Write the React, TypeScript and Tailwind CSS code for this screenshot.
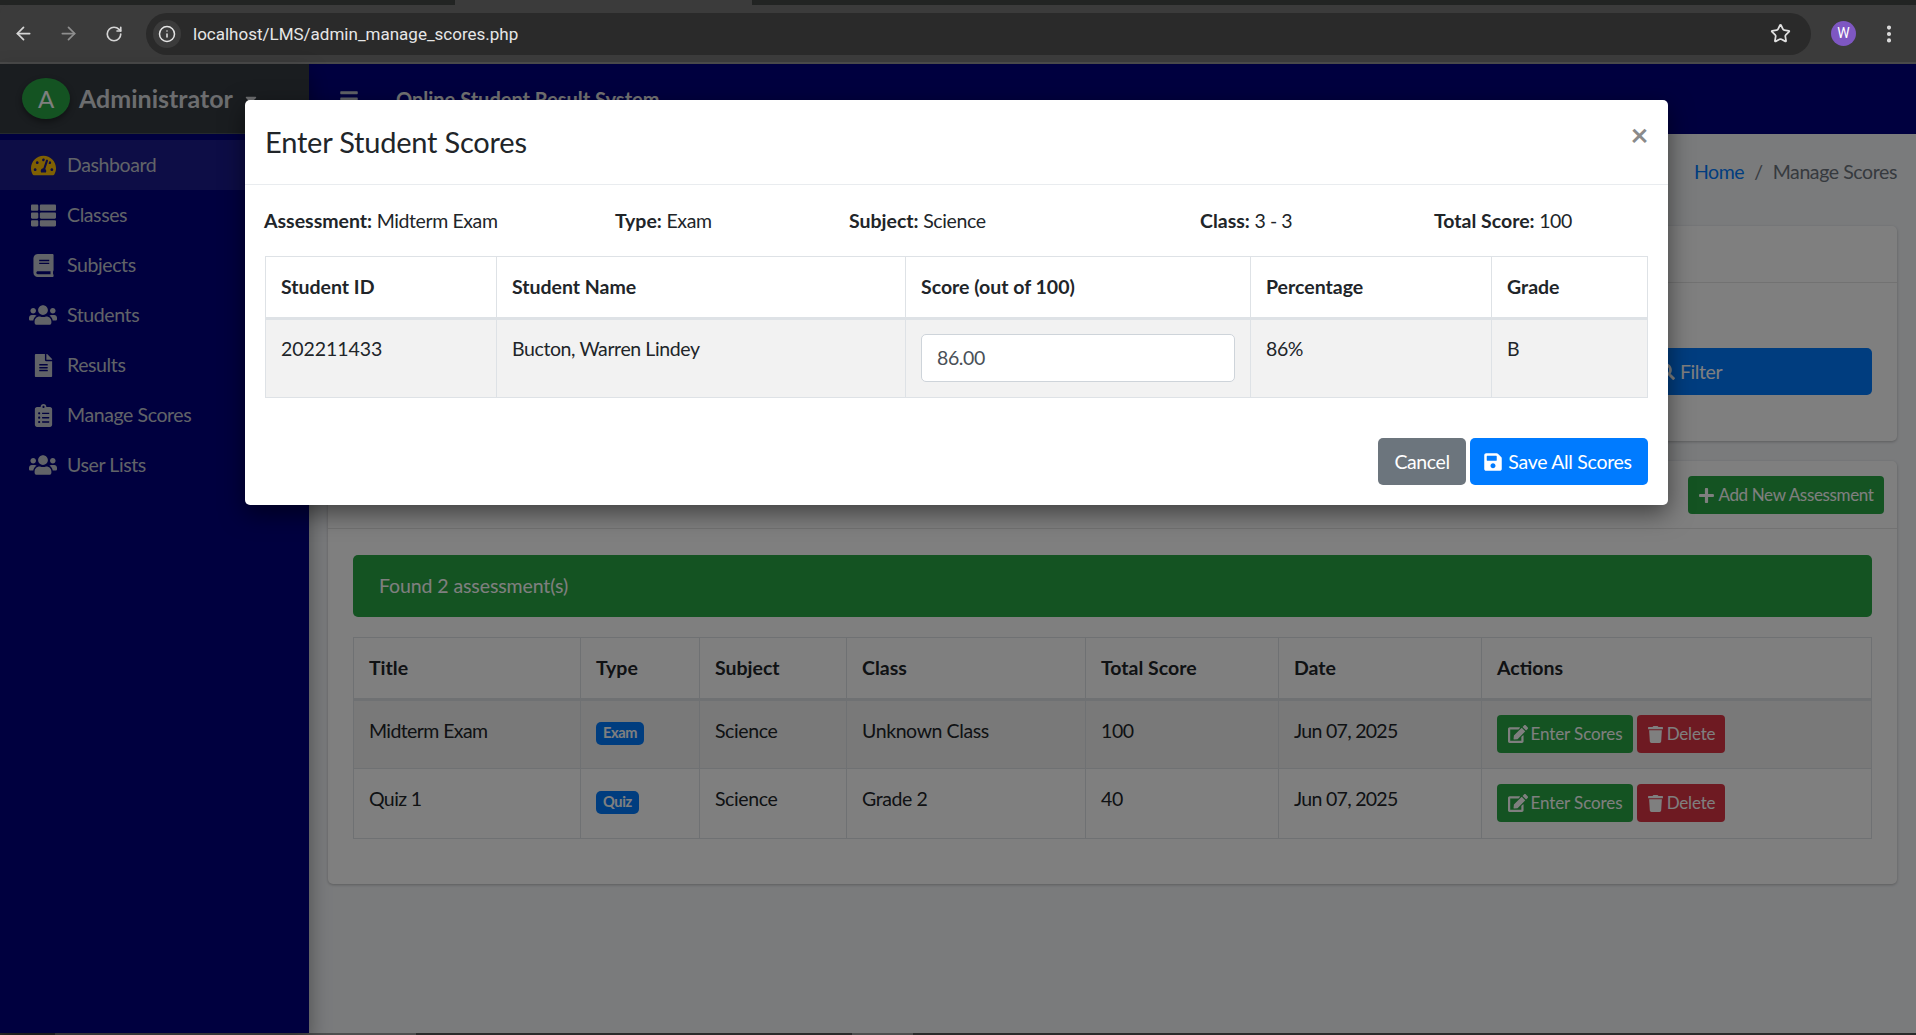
import React from "react";
import {
  FaTachometerAlt, FaThList, FaBook, FaUsers, FaFileAlt, FaClipboardList,
  FaSave, FaPlus, FaEdit, FaTrash, FaSearch, FaBars, FaCaretDown,
} from "react-icons/fa";
import { ArrowLeft, ArrowRight, RotateCw, Info, Star, EllipsisVertical } from "lucide-react";

const nav = [
  { label: "Dashboard", icon: FaTachometerAlt, active: true, size: "text-[25px]" },
  { label: "Classes", icon: FaThList, size: "text-[25px]" },
  { label: "Subjects", icon: FaBook, size: "text-[23px]" },
  { label: "Students", icon: FaUsers, size: "text-[28px]" },
  { label: "Results", icon: FaFileAlt, size: "text-[23px]" },
  { label: "Manage Scores", icon: FaClipboardList, size: "text-[23px]" },
  { label: "User Lists", icon: FaUsers, size: "text-[28px]" },
];

const rows = [
  { title: "Midterm Exam", type: "Exam", cls: "Unknown Class", total: "100", striped: true, h: "h-[69px]", pad: "pb-[8px]" },
  { title: "Quiz 1", type: "Quiz", cls: "Grade 2", total: "40", striped: false, h: "h-[70px]", pad: "pb-[10px]" },
];

function Sidebar() {
  return (
    <aside className="w-[309px] shrink-0 bg-[#00007f] shadow-[0_10px_20px_rgba(0,0,0,0.4)] z-10">
      <div className="h-[70px] bg-[#343a40] border-b border-[#4b545c] flex items-center pl-[22px]">
        <div className="w-[48px] h-[41px] rounded-[50%] bg-[#28a745] text-white flex items-center justify-center text-[24px] shadow-[0_3px_6px_rgba(0,0,0,0.4)]">A</div>
        <span className="ml-[9px] text-[25px] font-bold tracking-normal text-[#d8dade]">Administrator</span>
        <FaCaretDown className="ml-[9px] text-[#d8dade] text-[18px]" />
      </div>
      <nav className="pt-[6px] flex flex-col">
        {nav.map((n) => (
          <div key={n.label} className={`h-[50px] flex items-center ${n.active ? "bg-white/10" : ""}`}>
            <span className="w-[67px] flex justify-center pl-[19px]">
              <n.icon className={`${n.size} ${n.active ? "text-[#ffc107]" : "text-[#c2c7d0]"}`} />
            </span>
            <span className="text-[19.5px] text-[#c2c7d0]">{n.label}</span>
          </div>
        ))}
      </nav>
    </aside>
  );
}

function Background() {
  return (
    <main className="flex-1 min-w-0 flex flex-col bg-[#f4f6f9]">
      <header className="h-[70px] shrink-0 bg-[#00007f] flex items-center pl-[30px]">
        <FaBars className="text-[#c2c7d0] text-[20px]" />
        <span className="ml-[37px] text-[20px] font-bold tracking-normal text-[#e8e8e8]">Online Student Result System</span>
      </header>
      <div className="pl-[19px] pr-[19px]">
        <div className="h-[92px] flex justify-end pt-[26px] text-[19.5px] leading-[24px]">
          <span className="text-[#007bff]">Home</span>
          <span className="mx-[10px] text-[#6c757d]">/</span>
          <span className="text-[#6c757d]">Manage Scores</span>
        </div>

        <section className="h-[215px] bg-white rounded-[5px] shadow-[0_1px_3px_rgba(0,0,0,0.25)]">
          <div className="h-[57px] border-b border-[#e5e5e5]" />
          <div className="flex justify-end pt-[65px] pr-[25px]">
            <button className="w-[364px] h-[47px] bg-[#007bff] rounded-[5px] text-white text-[19.5px] flex items-center justify-center gap-[5px]">
              <FaSearch className="text-[17px]" />
              Filter
            </button>
          </div>
        </section>

        <section className="mt-[20px] h-[423px] bg-white rounded-[5px] shadow-[0_1px_3px_rgba(0,0,0,0.25)]">
          <div className="h-[68px] border-b border-[#e5e5e5] flex justify-end items-start pt-[15px] pr-[13px]">
            <button className="w-[196px] h-[38px] bg-[#28a745] rounded-[4px] text-white text-[17px] tracking-[-0.35px] flex items-center justify-center gap-[3px]">
              <FaPlus className="text-[17px]" />
              Add New Assessment
            </button>
          </div>
          <div className="px-[25px] pt-[26px]">
            <div className="h-[62px] bg-[#28a745] rounded-[5px] flex items-center pl-[26px] text-[19.5px] tracking-[-0.1px] text-white">Found 2 assessment(s)</div>
            <table className="mt-[20px] w-[1518px] table-fixed border-collapse text-[19.5px] text-[#212529]">
              <colgroup>
                <col className="w-[227px]" />
                <col className="w-[119px]" />
                <col className="w-[147px]" />
                <col className="w-[239px]" />
                <col className="w-[193px]" />
                <col className="w-[203px]" />
                <col className="w-[390px]" />
              </colgroup>
              <thead>
                <tr className="h-[62px]">
                  {["Title", "Type", "Subject", "Class", "Total Score", "Date", "Actions"].map((h) => (
                    <th key={h} className="border border-[#dee2e6] border-b-[3px] px-[15px] text-left font-bold tracking-normal">{h}</th>
                  ))}
                </tr>
              </thead>
              <tbody>
                {rows.map((r) => (
                  <tr key={r.title} className={`${r.h} ${r.striped ? "bg-black/5" : ""}`}>
                    <td className={`border border-[#dee2e6] px-[15px] tracking-[-0.6px] ${r.pad}`}>{r.title}</td>
                    <td className="border border-[#dee2e6] px-[15px] pb-[7px]">
                      <span className="inline-flex items-center h-[23px] px-[7px] bg-[#007bff] rounded-[5px] text-[14.6px] font-bold text-white">{r.type}</span>
                    </td>
                    <td className={`border border-[#dee2e6] px-[15px] ${r.pad}`}>Science</td>
                    <td className={`border border-[#dee2e6] px-[15px] ${r.pad}`}>{r.cls}</td>
                    <td className={`border border-[#dee2e6] px-[15px] ${r.pad}`}>{r.total}</td>
                    <td className={`border border-[#dee2e6] px-[15px] tracking-[-0.7px] ${r.pad}`}>Jun 07, 2025</td>
                    <td className="border border-[#dee2e6] px-[15px] pb-[1px]">
                      <div className="flex gap-[4px]">
                        <button className="w-[136px] h-[38px] bg-[#28a745] rounded-[4px] text-white text-[17px] tracking-[-0.1px] flex items-center justify-center gap-[3px]">
                          <FaEdit className="text-[20px]" />
                          Enter Scores
                        </button>
                        <button className="w-[88px] h-[38px] bg-[#dc3545] rounded-[4px] text-white text-[17px] tracking-[-0.2px] flex items-center justify-center gap-[3px]">
                          <FaTrash className="text-[17px]" />
                          Delete
                        </button>
                      </div>
                    </td>
                  </tr>
                ))}
              </tbody>
            </table>
          </div>
        </section>
      </div>
    </main>
  );
}

function Modal() {
  const info = [
    ["Assessment:", "Midterm Exam"],
    ["Type:", "Exam"],
    ["Subject:", "Science"],
    ["Class:", "3 - 3"],
    ["Total Score:", "100"],
  ];
  return (
    <div className="absolute left-[245px] top-[36px] w-[1423px] h-[405px] bg-white rounded-[5px] shadow-[0_8px_24px_rgba(0,0,0,0.5)] text-[#212529] z-30">
      <div className="h-[85px] border-b border-[#e9ecef] flex justify-between pl-[20px] pr-[20px]">
        <h5 className="text-[29px] tracking-[-0.2px] leading-[84px]">Enter Student Scores</h5>
        <span className="text-[31px] font-bold leading-[68px] text-[#8a8a8a]">×</span>
      </div>
      <div className="px-[20px]">
        <div className="-ml-[1px] grid grid-cols-[351px_234px_351px_234px_234px] h-[71px] items-center text-[19.5px]">
          {info.map(([k, v]) => (
            <div key={k}><b className="font-bold tracking-normal">{k}</b> {v}</div>
          ))}
        </div>
        <table className="w-[1382px] table-fixed border-collapse text-[19.5px]">
          <colgroup>
            <col className="w-[231px]" />
            <col className="w-[409px]" />
            <col className="w-[345px]" />
            <col className="w-[241px]" />
            <col className="w-[156px]" />
          </colgroup>
          <thead>
            <tr className="h-[62px]">
              {["Student ID", "Student Name", "Score (out of 100)", "Percentage", "Grade"].map((h) => (
                <th key={h} className="border border-[#dee2e6] border-b-[3px] px-[15px] text-left font-bold tracking-normal">{h}</th>
              ))}
            </tr>
          </thead>
          <tbody>
            <tr className="h-[79px] bg-[#f2f2f2]">
              <td className="border border-[#dee2e6] px-[15px] align-top pt-[14px] tracking-[-0.05px]">202211433</td>
              <td className="border border-[#dee2e6] px-[15px] align-top pt-[14px]">Bucton, Warren Lindey</td>
              <td className="border border-[#dee2e6] px-[15px] pb-[2px]">
                <input readOnly value="86.00" className="w-full h-[48px] bg-white border border-[#ced4da] rounded-[5px] px-[15px] text-[19.5px] text-[#495057] tracking-[-0.4px]" />
              </td>
              <td className="border border-[#dee2e6] px-[15px] align-top pt-[14px]">86%</td>
              <td className="border border-[#dee2e6] px-[15px] align-top pt-[14px]">B</td>
            </tr>
          </tbody>
        </table>
        <div className="flex justify-end gap-[4px] mt-[40px]">
          <button className="w-[88px] h-[47px] rounded-[5px] bg-[#6c757d] text-white text-[19.5px]">Cancel</button>
          <button className="w-[178px] h-[47px] rounded-[5px] bg-[#007bff] text-white text-[19.5px] tracking-[-0.3px] flex items-center justify-center gap-[5px] pr-[3px]">
            <FaSave className="text-[20px]" />
            Save All Scores
          </button>
        </div>
      </div>
    </div>
  );
}

export default function App() {
  return (
    <div className="w-[1916px] h-[1035px] flex flex-col overflow-hidden bg-[#3b3b3b] font-['Lato','Liberation_Sans',sans-serif] tracking-[-0.4px]">
      <div className="h-[5px] shrink-0 flex bg-[#222423]">
        <div className="w-[455px] rounded-br-[8px] bg-[#222423]" />
        <div className="w-[297px] bg-[#3b3b3b]" />
        <div className="flex-1 rounded-bl-[8px] bg-[#222423]" />
      </div>
      <div className="h-[57px] shrink-0 bg-[#3b3b3b] rounded-t-[8px] flex items-center text-[#d5d5d5]">
        <span className="w-[46px] flex justify-center"><ArrowLeft size={21} strokeWidth={2} /></span>
        <span className="w-[45px] flex justify-center text-[#8e8e8e]"><ArrowRight size={21} strokeWidth={2} /></span>
        <span className="w-[45px] flex justify-center"><RotateCw size={18} strokeWidth={2.2} /></span>
        <div className="ml-[10px] w-[1665px] h-[42px] rounded-full bg-[#2a2a2a] flex items-center pl-[7px] pr-[20px]">
          <span className="w-[28px] h-[28px] rounded-full bg-[#3b3b3b] flex items-center justify-center"><Info size={18} strokeWidth={2} className="text-[#e5e5e5]" /></span>
          <span className="ml-[12px] flex-1 pt-[2px] font-['Roboto',sans-serif] tracking-normal text-[17px] text-[#e6e6e6]">localhost/LMS/admin_manage_scores.php</span>
          <Star size={21} strokeWidth={2} className="text-[#e0e0e0]" />
        </div>
        <span className="ml-[20px] w-[25px] h-[25px] rounded-full bg-[#7e57c2] text-white text-[14px] flex items-center justify-center font-['Roboto',sans-serif] tracking-normal">W</span>
        <EllipsisVertical size={22} strokeWidth={2.5} className="ml-[22px] text-[#e0e0e0]" />
      </div>
      <div className="h-[2px] shrink-0 bg-[#4a4a4a]" />
      <div className="relative flex-1 min-h-0 flex">
        <Sidebar />
        <Background />
        <div className="absolute inset-0 bg-black/50 z-20" />
        <Modal />
      </div>
      <div className="h-[2px] shrink-0 flex bg-[#2b2b2b]">
        <div className="w-[55px]" />
        <div className="w-[361px] bg-[#4f4f4f]" />
        <div className="w-[436px]" />
        <div className="w-[61px] bg-[#4f4f4f]" />
      </div>
    </div>
  );
}
